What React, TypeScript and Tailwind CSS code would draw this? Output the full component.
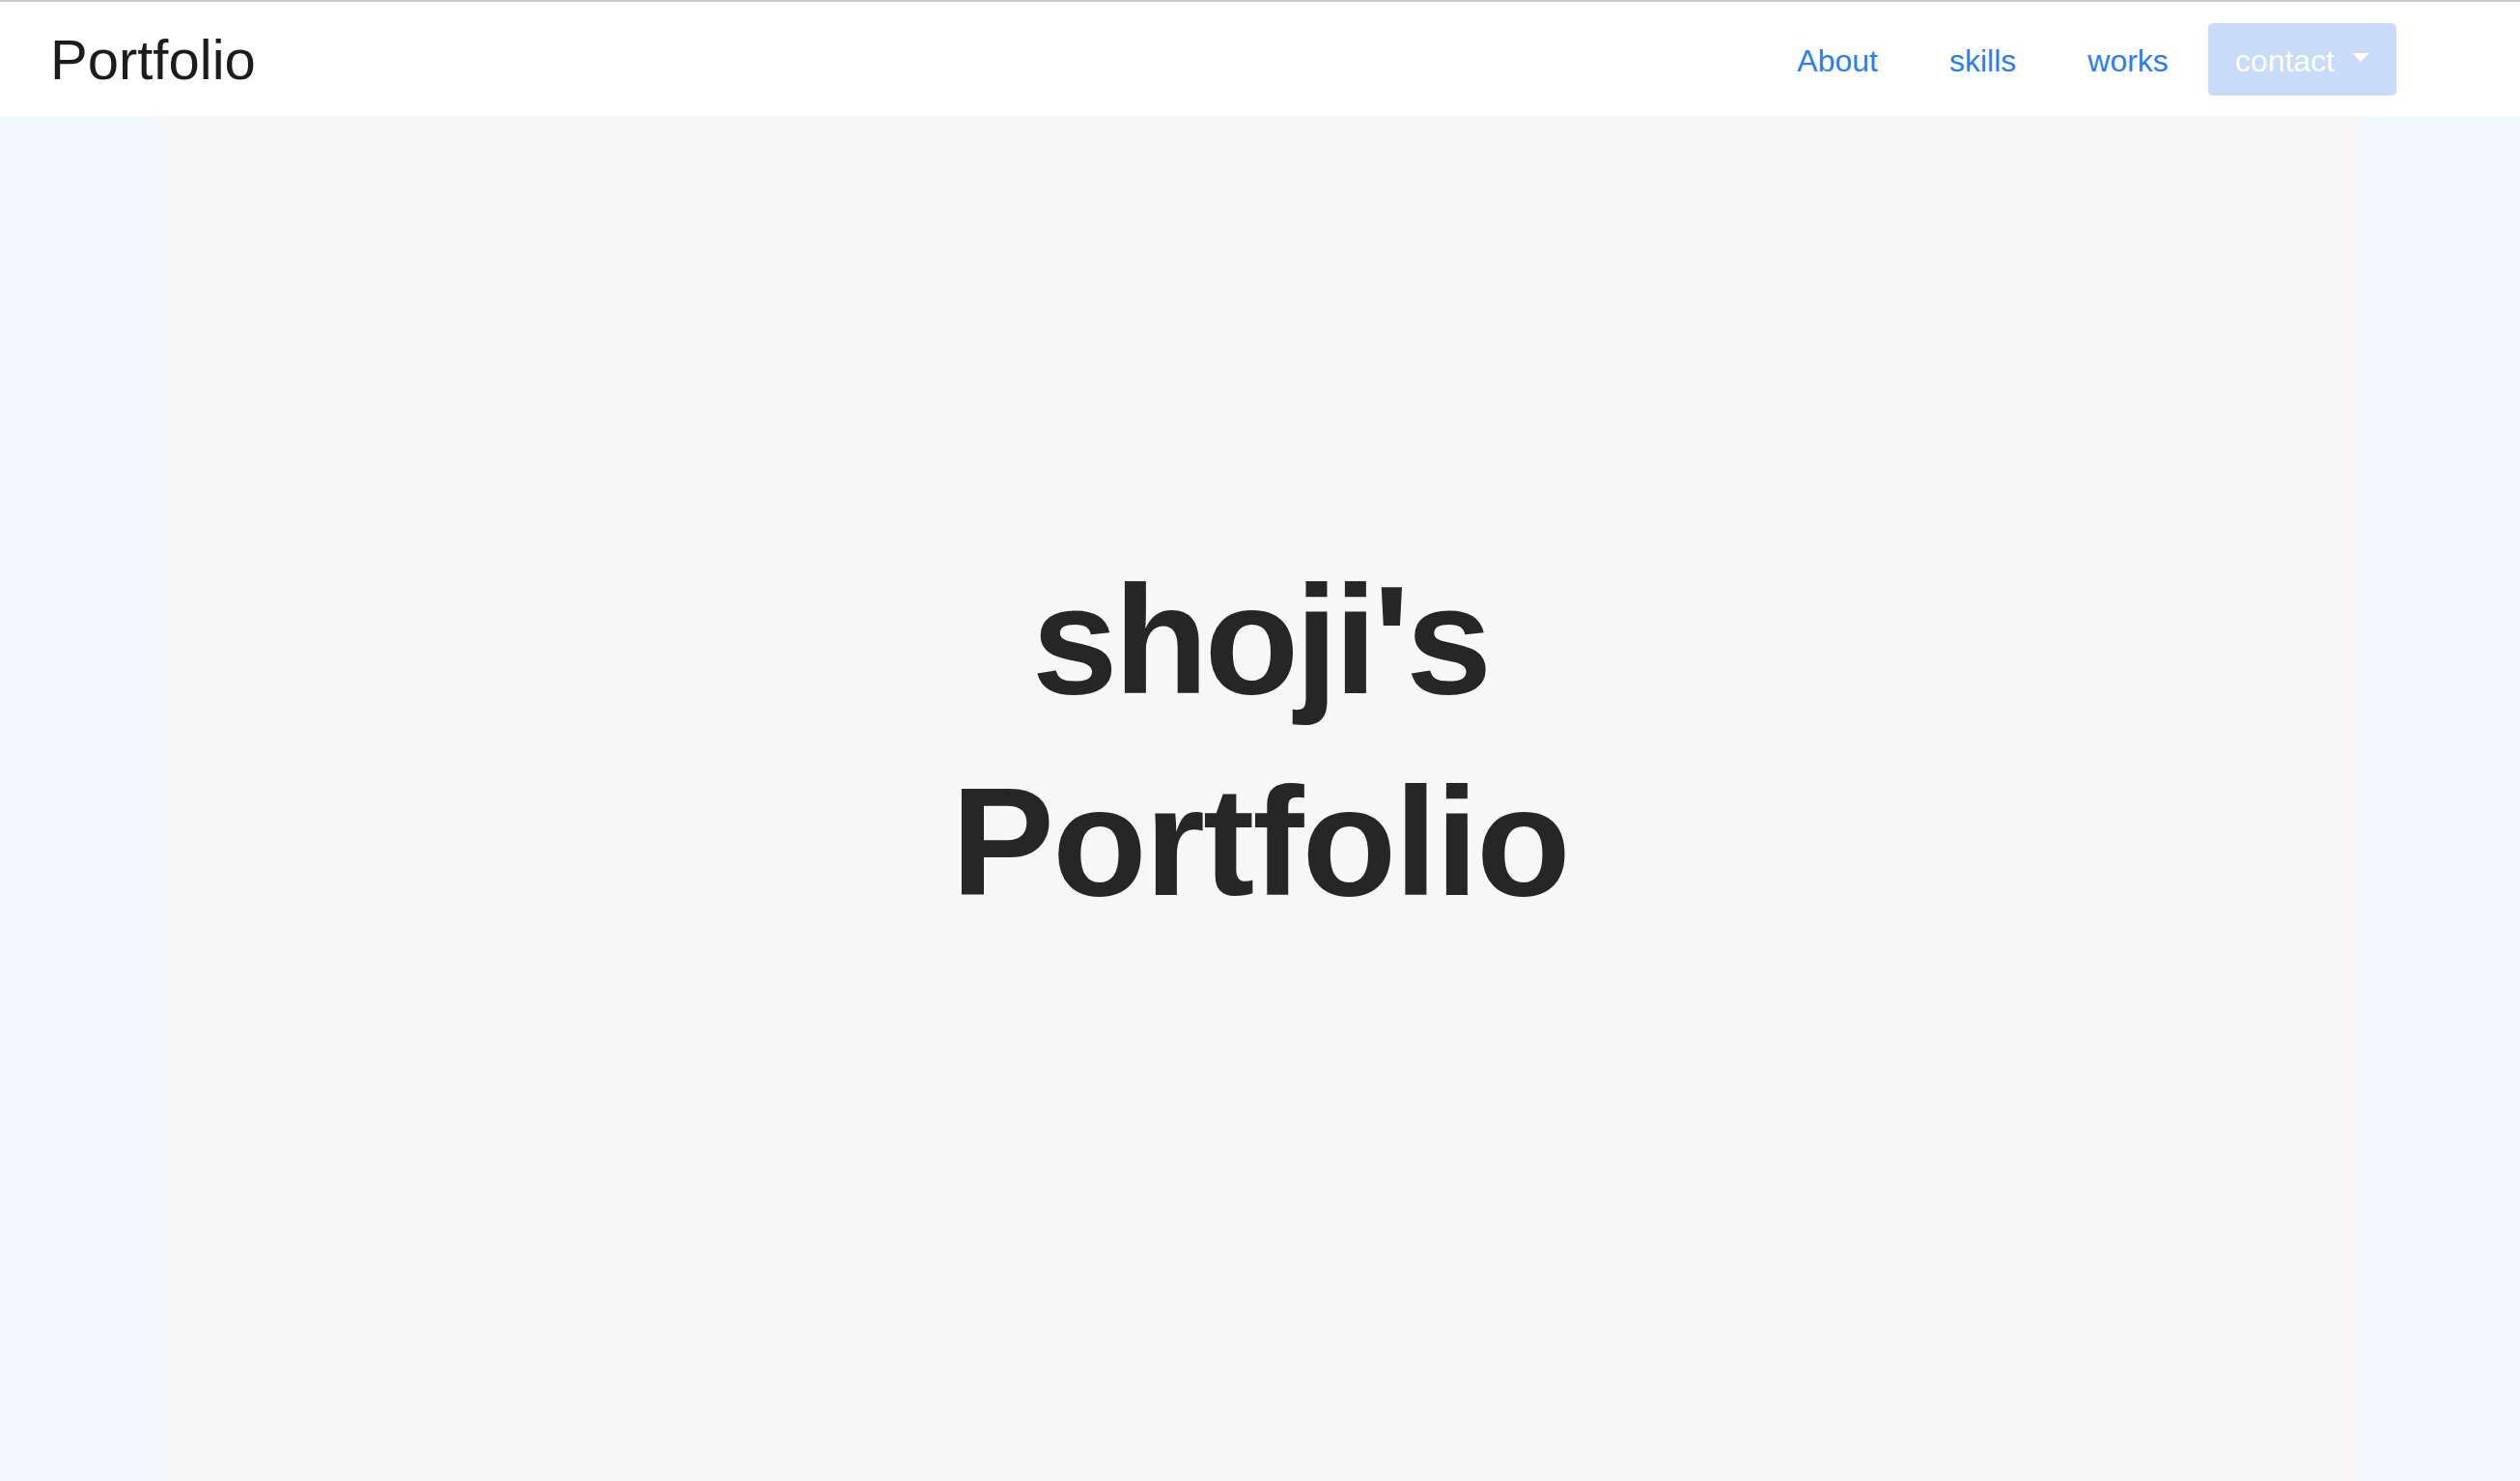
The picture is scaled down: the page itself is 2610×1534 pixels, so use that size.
import React from "react"

const LINKS = ["About", "skills", "works"]

function Navbar() {
  return (
    <header className="flex h-[120px] items-center justify-between border-t-2 border-[#c8c8c8] bg-white pl-[52px] pr-[128px]">
      <a className="mt-[1px] text-[58px] leading-normal text-[#1c1c1c]">Portfolio</a>
      <nav className="flex items-center">
        {LINKS.map((l) => (
          <a key={l} className="mt-[4px] px-[37px] text-[32px] leading-normal text-[#287df5]">
            {l}
          </a>
        ))}
        <button className="ml-[4px] flex h-[75px] items-center rounded-[5px] bg-[#c8dbf8] px-[28px] text-[32px] leading-normal text-white">
          <span className="mt-[3px]">contact</span>
          <span className="ml-[18px] mb-[4px] h-0 w-0 border-x-[9.5px] border-t-[9px] border-x-transparent border-t-white" />
        </button>
      </nav>
    </header>
  )
}

export default function App() {
  return (
    <div className="flex min-h-screen flex-col bg-[#f0f7ff] font-['Liberation_Sans',Arial,sans-serif]">
      <Navbar />
      <main className="mx-auto flex w-full max-w-[2279px] flex-1 flex-col items-center justify-center bg-[#f7f7f7] pb-[120px]">
        <h1 className="text-center text-[160px] font-bold leading-[209px] text-[#262626]">
          <span className="tracking-[-4px]">shoji's</span>
          <br />
          <span className="tracking-[-2px]">Portfolio</span>
        </h1>
      </main>
    </div>
  )
}
